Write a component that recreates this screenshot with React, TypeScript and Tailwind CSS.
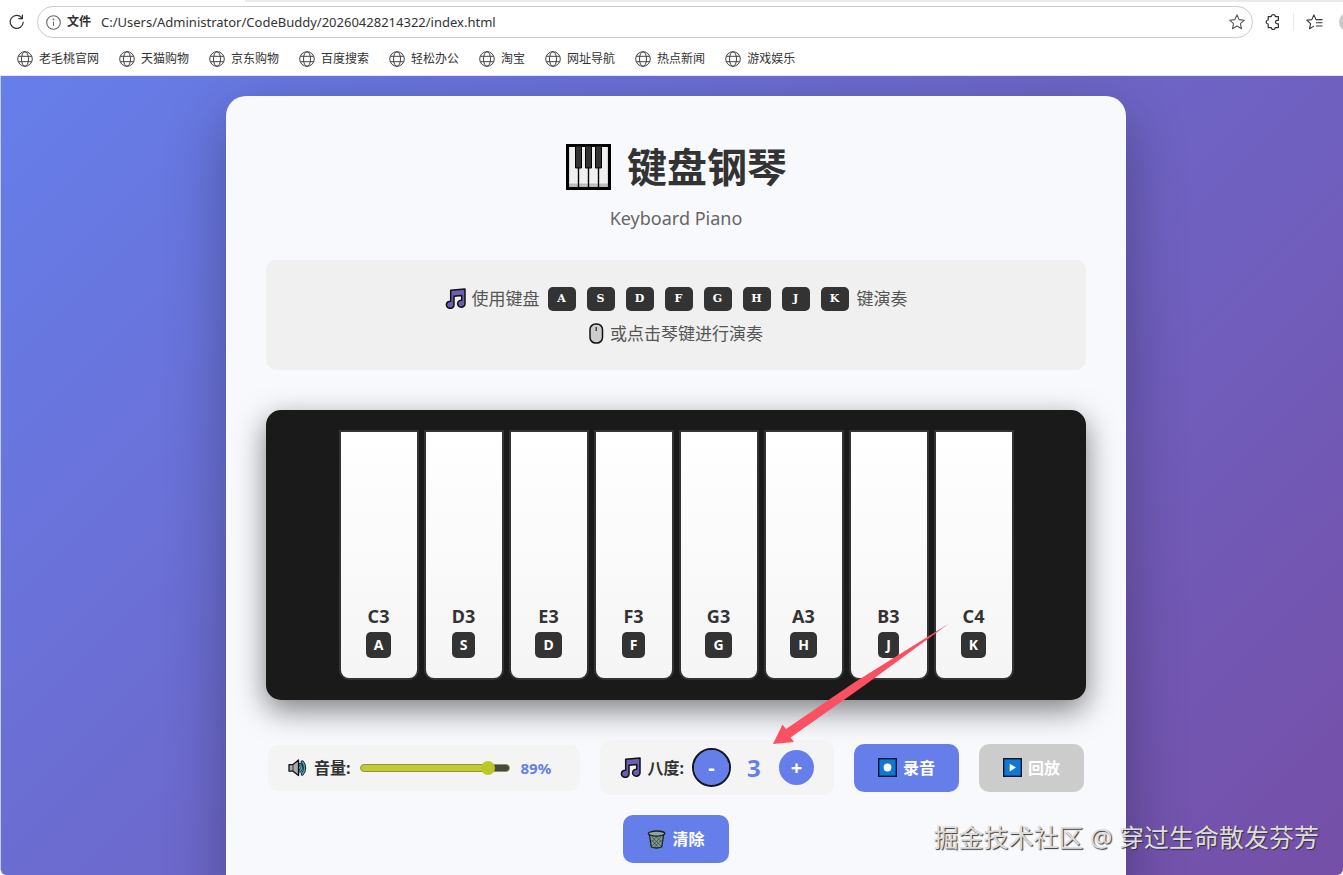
import { useState } from "react";

const BOOKMARKS = [
  "老毛桃官网",
  "天猫购物",
  "京东购物",
  "百度搜索",
  "轻松办公",
  "淘宝",
  "网址导航",
  "热点新闻",
  "游戏娱乐",
];

// Keyboard letter -> note; the last key is the next octave's C.
const KEYS = [
  { letter: "A", note: "C", shift: 0 },
  { letter: "S", note: "D", shift: 0 },
  { letter: "D", note: "E", shift: 0 },
  { letter: "F", note: "F", shift: 0 },
  { letter: "G", note: "G", shift: 0 },
  { letter: "H", note: "A", shift: 0 },
  { letter: "J", note: "B", shift: 0 },
  { letter: "K", note: "C", shift: 1 },
];

function ReloadIcon() {
  return (
    <svg className="h-4 w-4" viewBox="0 0 16 16" fill="none" stroke="#333" strokeWidth="1.2" strokeLinecap="round">
      <path d="M14.2 8.2A6.5 6.5 0 1 1 12.6 3.6" />
      <path d="M13.4 1v3.6H9.8" />
    </svg>
  );
}

function InfoIcon() {
  return (
    <svg className="h-[15px] w-[15px]" viewBox="0 0 15 15" fill="none" stroke="#666" strokeWidth="1.1">
      <circle cx="7.5" cy="7.5" r="6.8" />
      <path d="M7.5 6.6v4.2" />
      <circle cx="7.5" cy="4.4" r="0.4" fill="#666" />
    </svg>
  );
}

function GlobeIcon() {
  return (
    <svg className="h-4 w-4" viewBox="0 0 16 16" fill="none" stroke="#444" strokeWidth="1">
      <circle cx="8" cy="8" r="7.3" />
      <ellipse cx="8" cy="8" rx="3.5" ry="7.3" />
      <path d="M1.3 5.3h13.4M1.3 10.7h13.4" />
    </svg>
  );
}

function StarIcon() {
  return (
    <svg className="h-4 w-4" viewBox="0 0 16 16" fill="none" stroke="#555" strokeWidth="1.1" strokeLinejoin="round">
      <path d="M8 .9l2.1 4.7 5.2.6-3.9 3.4 1.1 5.1L8 12.1l-4.5 2.6 1.1-5.1L.7 6.2l5.2-.6z" />
    </svg>
  );
}

function PuzzleIcon() {
  return (
    <svg className="h-4 w-4" viewBox="0 0 16 16" fill="none" stroke="#333" strokeWidth="1.2" strokeLinejoin="round">
      <path d="M3.2 2.600h3.100a2 2 0 0 1 4 0h3.100v3.700h-1.100a1.800 1.800 0 0 0 0 3.600h1.100v3.700h-3.100a2 2 0 0 1-4 0H3.200V10a2 2 0 0 1 0-4z" />
    </svg>
  );
}

function FavoritesIcon() {
  return (
    <svg className="h-4 w-[17px]" viewBox="0 0 17 16" fill="none" stroke="#333" strokeWidth="1.1" strokeLinejoin="round">
      <path d="M10.6 5.6H10L7.900.900 5.800 5.600l-5.100.600 3.900 3.400-1.100 5.100 4.400-2.600" />
      <path d="M10.2 5.6h6.3M10 8.800h6.500M10 12h6.500" />
    </svg>
  );
}

function PianoIcon() {
  return (
    <svg className="h-[46px] w-[46px]" viewBox="0 0 46 46">
      <rect x="2" y="1" width="43" height="44" fill="#f0f0f0" stroke="#000" strokeWidth="2" />
      <path d="M3.500 39.500h40v4h-40z" fill="#bbb" />
      <path d="M3.500 2.500h40v41h-40z" fill="none" stroke="#000" strokeWidth="1.2" />
      <path d="M13.500 22v21M23.500 22v21M33.500 22v21" stroke="#000" strokeWidth="1.4" />
      <path d="M10.500 2h6v22h-6zM20.500 2h6v22h-6zM30.500 2h6v22h-6z" fill="#333" stroke="#000" strokeWidth="1" />
    </svg>
  );
}

function NoteIcon() {
  return (
    <svg className="h-[21px] w-[21px]" viewBox="0 0 21 21">
      <path
        d="M5.7 2.2L20 1v14.6a3.7 3.5 0 1 1-3.3-3.4V7.5L9 8.2v8.9a3.8 3.6 0 1 1-3.3-3.9z"
        fill="#6b5fb5"
        stroke="#111"
        strokeWidth="1.5"
        strokeLinejoin="round"
      />
    </svg>
  );
}

function MouseIcon() {
  return (
    <svg className="h-[21px] w-[15px]" viewBox="0 0 15 21">
      <rect x="1" y="1" width="12.5" height="19" rx="5.6" fill="#ccc" stroke="#111" strokeWidth="1.5" />
      <path d="M7.2 4v4" stroke="#222" strokeWidth="1.2" />
    </svg>
  );
}

function SpeakerIcon() {
  return (
    <svg className="h-5 w-5" viewBox="0 0 20 20">
      <path d="M1 6.6h4L10.5 2v15.5L5 13.2H1z" fill="#aaa" stroke="#111" strokeWidth="1.3" strokeLinejoin="round" />
      <path d="M5 6.6v6.6" stroke="#333" strokeWidth="1" />
      <g fill="none" strokeLinecap="round">
        <path d="M12 6.5a5 5 0 0 1 0 6.5M14.3 4a9 9 0 0 1 0 12" stroke="#111" strokeWidth="3.2" />
        <path d="M12 6.5a5 5 0 0 1 0 6.5M14.3 4a9 9 0 0 1 0 12" stroke="#35a7b8" strokeWidth="1.7" />
      </g>
    </svg>
  );
}

function RecordIcon() {
  return (
    <svg className="h-[19px] w-[19px]" viewBox="0 0 19 19">
      <rect x=".7" y=".7" width="17.6" height="17.6" fill="#0f78d4" stroke="#0a1830" strokeWidth="1.4" />
      <circle cx="9.5" cy="9.5" r="3.9" fill="#fff" />
    </svg>
  );
}

function PlayIcon() {
  return (
    <svg className="h-[19px] w-[19px]" viewBox="0 0 19 19">
      <rect x=".7" y=".7" width="17.6" height="17.6" fill="#0f78d4" stroke="#0a1830" strokeWidth="1.4" />
      <path d="M6.7 5.8v7.6l6.2-3.8z" fill="#fff" />
    </svg>
  );
}

function TrashIcon() {
  return (
    <svg className="h-[19px] w-[19px]" viewBox="0 0 19 19" stroke="#182420">
      <path d="M2.3 4l2 13q5.2 2 10.4 0l2-13z" fill="#80988f" strokeWidth="1.3" />
      <path d="M5 7l9 9M8.5 6l6 6M4.5 10l7 7M14 7l-9 9M10.5 6l-6 6M14.5 10l-7 7" strokeWidth=".5" />
      <ellipse cx="9.5" cy="3.6" rx="8.3" ry="2.6" fill="#91a69d" strokeWidth="1.3" />
    </svg>
  );
}

function BrowserBar() {
  return (
    <header className="border-b border-gray-200 bg-white text-[#333]">
      <div className="ml-[245px] h-0.5 bg-[#ebebeb]" />
      <div className="flex items-center overflow-hidden pt-1">
        <button type="button" aria-label="刷新" className="ml-[9px]">
          <ReloadIcon />
        </button>
        <div className="ml-3 flex h-8 flex-1 items-center rounded-full border border-[#ccc] pr-[7px] pl-2">
          <InfoIcon />
          <span className="ml-1.5 text-xs font-bold">文件</span>
          <input
            aria-label="地址"
            className="ml-2.5 min-w-0 flex-1 pt-px text-[13px] outline-none"
            defaultValue="C:/Users/Administrator/CodeBuddy/20260428214322/index.html"
          />
          <button type="button" aria-label="收藏此页">
            <StarIcon />
          </button>
        </div>
        <button type="button" aria-label="扩展" className="ml-3">
          <PuzzleIcon />
        </button>
        <div className="mx-3 h-[18px] w-px bg-gray-200" />
        <button type="button" aria-label="收藏夹" className="mr-4">
          <FavoritesIcon />
        </button>
        <div className="-mr-4 h-5 w-5 shrink-0 rounded-full bg-[#c8c8c8]" />
      </div>
      <nav className="flex h-[37px] items-center gap-5 pt-1 pl-[17px] text-xs">
        {BOOKMARKS.map((name) => (
          <a key={name} href="#" className="flex items-center gap-1.5 whitespace-nowrap">
            <GlobeIcon />
            {name}
          </a>
        ))}
      </nav>
    </header>
  );
}

function Piano({ octave }: { octave: number }) {
  return (
    <div className="mt-10 flex justify-center gap-[5px] rounded-[15px] bg-[#1a1a1a] p-5 shadow-[0_10px_30px_rgba(0,0,0,0.5)]">
      {KEYS.map((k) => (
        <button
          key={k.letter}
          type="button"
          className="flex h-[250px] w-20 flex-col items-center justify-end rounded-b-[10px] border-2 border-[#333] bg-linear-to-b from-white to-[#f5f5f5] pb-5 font-bold"
        >
          <span className="text-lg leading-6 text-[#333]">
            {k.note}
            {octave + k.shift}
          </span>
          <span className="mt-1 rounded-[5px] bg-[#333] px-2 text-sm leading-[26px] text-white">{k.letter}</span>
        </button>
      ))}
    </div>
  );
}

function Controls({ octave, setOctave }: { octave: number; setOctave: (n: number) => void }) {
  const [volume, setVolume] = useState(89);
  // the thumb centre travels between 7px and 143px of the 150px track
  const fill = 7 + (volume / 100) * 136;

  return (
    <div className="mt-10 flex flex-wrap items-center justify-center gap-5 font-bold">
      <div className="flex items-center gap-2.5 rounded-[10px] bg-[#f4f4f5] px-5 py-2.5 leading-[26px]">
        <label htmlFor="volume" className="flex items-center gap-1.5 text-[#333]">
          <SpeakerIcon />
          音量:
        </label>
        <input
          id="volume"
          type="range"
          min={0}
          max={100}
          value={volume}
          onChange={(e) => setVolume(Number(e.target.value))}
          style={{ backgroundImage: `linear-gradient(to right, #c0cc30 ${fill}px, #484648 ${fill}px)` }}
          className="h-2 w-[150px] appearance-none rounded-full border border-[#8f9540] [&::-webkit-slider-thumb]:h-3.5 [&::-webkit-slider-thumb]:w-3.5 [&::-webkit-slider-thumb]:appearance-none [&::-webkit-slider-thumb]:rounded-full [&::-webkit-slider-thumb]:bg-[#b9ca26]"
        />
        <span className="w-10 text-[15px] leading-[26px] text-[#667eea]">{volume}%</span>
      </div>

      <div className="flex items-center gap-2.5 rounded-[10px] bg-[#f4f4f5] px-5 py-2.5">
        <span className="flex items-center gap-1.5 text-[#333]">
          <NoteIcon />
          八度:
        </span>
        <button
          type="button"
          aria-label="降低八度"
          onClick={() => setOctave(Math.max(1, octave - 1))}
          className="h-[35px] w-[35px] rounded-full bg-[#667eea] text-xl leading-none text-white outline-2 outline-[#10142c]"
        >
          -
        </button>
        <span className="w-[30px] text-center text-2xl leading-[35px] text-[#667eea]">{octave}</span>
        <button
          type="button"
          aria-label="升高八度"
          onClick={() => setOctave(Math.min(7, octave + 1))}
          className="h-[35px] w-[35px] rounded-full bg-[#667eea] text-xl leading-none text-white"
        >
          +
        </button>
      </div>

      <button type="button" className="flex h-12 items-center gap-1.5 rounded-[10px] bg-[#667eea] px-6 text-white">
        <RecordIcon />
        录音
      </button>
      <button type="button" disabled className="flex h-12 items-center gap-1.5 rounded-[10px] bg-[#ccc] px-6 text-white">
        <PlayIcon />
        回放
      </button>
      <button type="button" className="flex h-12 items-center gap-1.5 rounded-[10px] bg-[#667eea] px-6 text-white">
        <TrashIcon />
        清除
      </button>
    </div>
  );
}

export default function App() {
  const [octave, setOctave] = useState(3);

  return (
    <div className="relative flex h-screen flex-col overflow-hidden font-['Noto_Sans','Noto_Sans_CJK_SC',sans-serif]">
      <BrowserBar />

      <div className="min-h-0 flex-1 overflow-hidden rounded-b-md border-l border-[#c5cbea] bg-[linear-gradient(135deg,#667eea_0%,#764ba2_108%)] pt-5 pr-5 pl-7">
        <main className="mx-auto max-w-[900px] rounded-[20px] bg-[#f8f9fd] p-10 shadow-[0_20px_60px_rgba(0,0,0,0.3)]">
          <h1 className="flex items-center justify-center gap-4 text-[40px] leading-[62px] font-bold text-[#333]">
            <PianoIcon />
            键盘钢琴
          </h1>
          <p className="mt-1.5 text-center text-lg leading-7 text-[#666]">Keyboard Piano</p>

          <div className="mt-7 rounded-[10px] bg-[#f0f0f0] px-5 pt-[21px] pb-[19px] text-[17px] leading-[35px] text-[#555]">
            <p className="flex items-center justify-center gap-2">
              <span className="flex items-center gap-1.5">
                <NoteIcon />
                使用键盘
              </span>
              <span className="flex gap-[11px]">
                {KEYS.map((k) => (
                  <kbd
                    key={k.letter}
                    className="w-7 rounded-[5px] bg-[#333] text-center font-['DejaVu_Serif',serif] text-[11px] leading-6 font-bold text-white"
                  >
                    {k.letter}
                  </kbd>
                ))}
              </span>
              键演奏
            </p>
            <p className="flex items-center justify-center gap-1.5">
              <MouseIcon />
              或点击琴键进行演奏
            </p>
          </div>

          <Piano octave={octave} />
          <Controls octave={octave} setOctave={setOctave} />
        </main>
      </div>

      {/* arrow pointing at the octave control */}
      <svg className="pointer-events-none absolute top-[620px] left-[770px] h-[130px] w-[185px]" viewBox="0 0 185 130">
        <path d="M3 124L12.500 104.500 16 109 85 62 179 3.500 95 65 20.500 117.500 24 122z" fill="#fb5062" />
      </svg>

      <p className="pointer-events-none absolute right-6 bottom-5 text-[25px] leading-9 text-[#ddd] [text-shadow:1px_1px_1px_#333]">
        掘金技术社区 @ 穿过生命散发芬芳
      </p>
    </div>
  );
}
